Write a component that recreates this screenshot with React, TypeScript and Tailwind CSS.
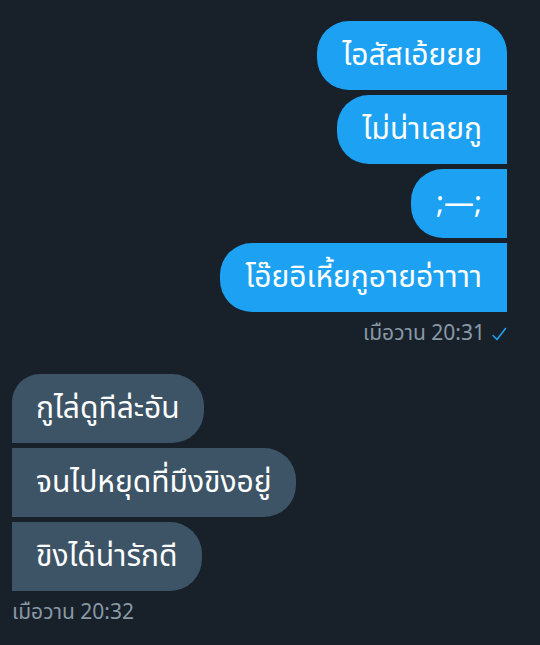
const sent = ["ไอสัสเอ้ยยย", "ไม่น่าเลยกู", ";—;", "โอ๊ยอิเหี้ยกูอายอ่าาาา"];
const received = ["กูไล่ดูทีล่ะอัน", "จนไปหยุดที่มึงขิงอยู่", "ขิงได้น่ารักดี"];

function SentBubble({ text, first }: { text: string; first: boolean }) {
  return (
    <div
      className={`flex h-[69px] items-center rounded-l-[32px] bg-[#1da1f2] px-[25px] text-[30px] leading-none text-white ${
        first ? "rounded-tr-[32px]" : ""
      }`}
    >
      {text}
    </div>
  );
}

function ReceivedBubble({ text, first }: { text: string; first: boolean }) {
  return (
    <div
      className={`flex h-[69px] items-center rounded-r-[32px] bg-[#3d5466] px-6 text-[30px] leading-none text-white ${
        first ? "rounded-tl-[28px]" : ""
      }`}
    >
      {text}
    </div>
  );
}

export default function App() {
  return (
    <div
      className="flex h-[645px] w-[540px] flex-col bg-[#18202a] pt-[21px]"
      style={{ fontFamily: '"Noto Sans Thai", "Noto Sans", "DejaVu Sans", sans-serif' }}
    >
      <div className="flex flex-col items-end pr-[33px]">
        <div className="flex flex-col items-end gap-[5px]">
          {sent.map((t, i) => (
            <SentBubble key={i} text={t} first={i === 0} />
          ))}
        </div>
        <div className="mt-[12px] flex items-center gap-[6px] text-[21px] leading-[20px] text-[#8899a6]">
          <span>เมือวาน 20:31</span>
          <svg width="16" height="16" viewBox="0 0 16 16" fill="none">
            <path d="M2 9.5 L6 13.5 L14.5 2.5" stroke="#1da1f2" strokeWidth="1.6" strokeLinecap="round" strokeLinejoin="round" />
          </svg>
        </div>
      </div>

      <div className="mt-[30px] flex flex-col items-start pl-[12px]">
        <div className="flex flex-col items-start gap-[5px]">
          {received.map((t, i) => (
            <ReceivedBubble key={i} text={t} first={i === 0} />
          ))}
        </div>
        <div className="mt-[12px] text-[21px] leading-[20px] text-[#8899a6]">เมือวาน 20:32</div>
      </div>
    </div>
  );
}
